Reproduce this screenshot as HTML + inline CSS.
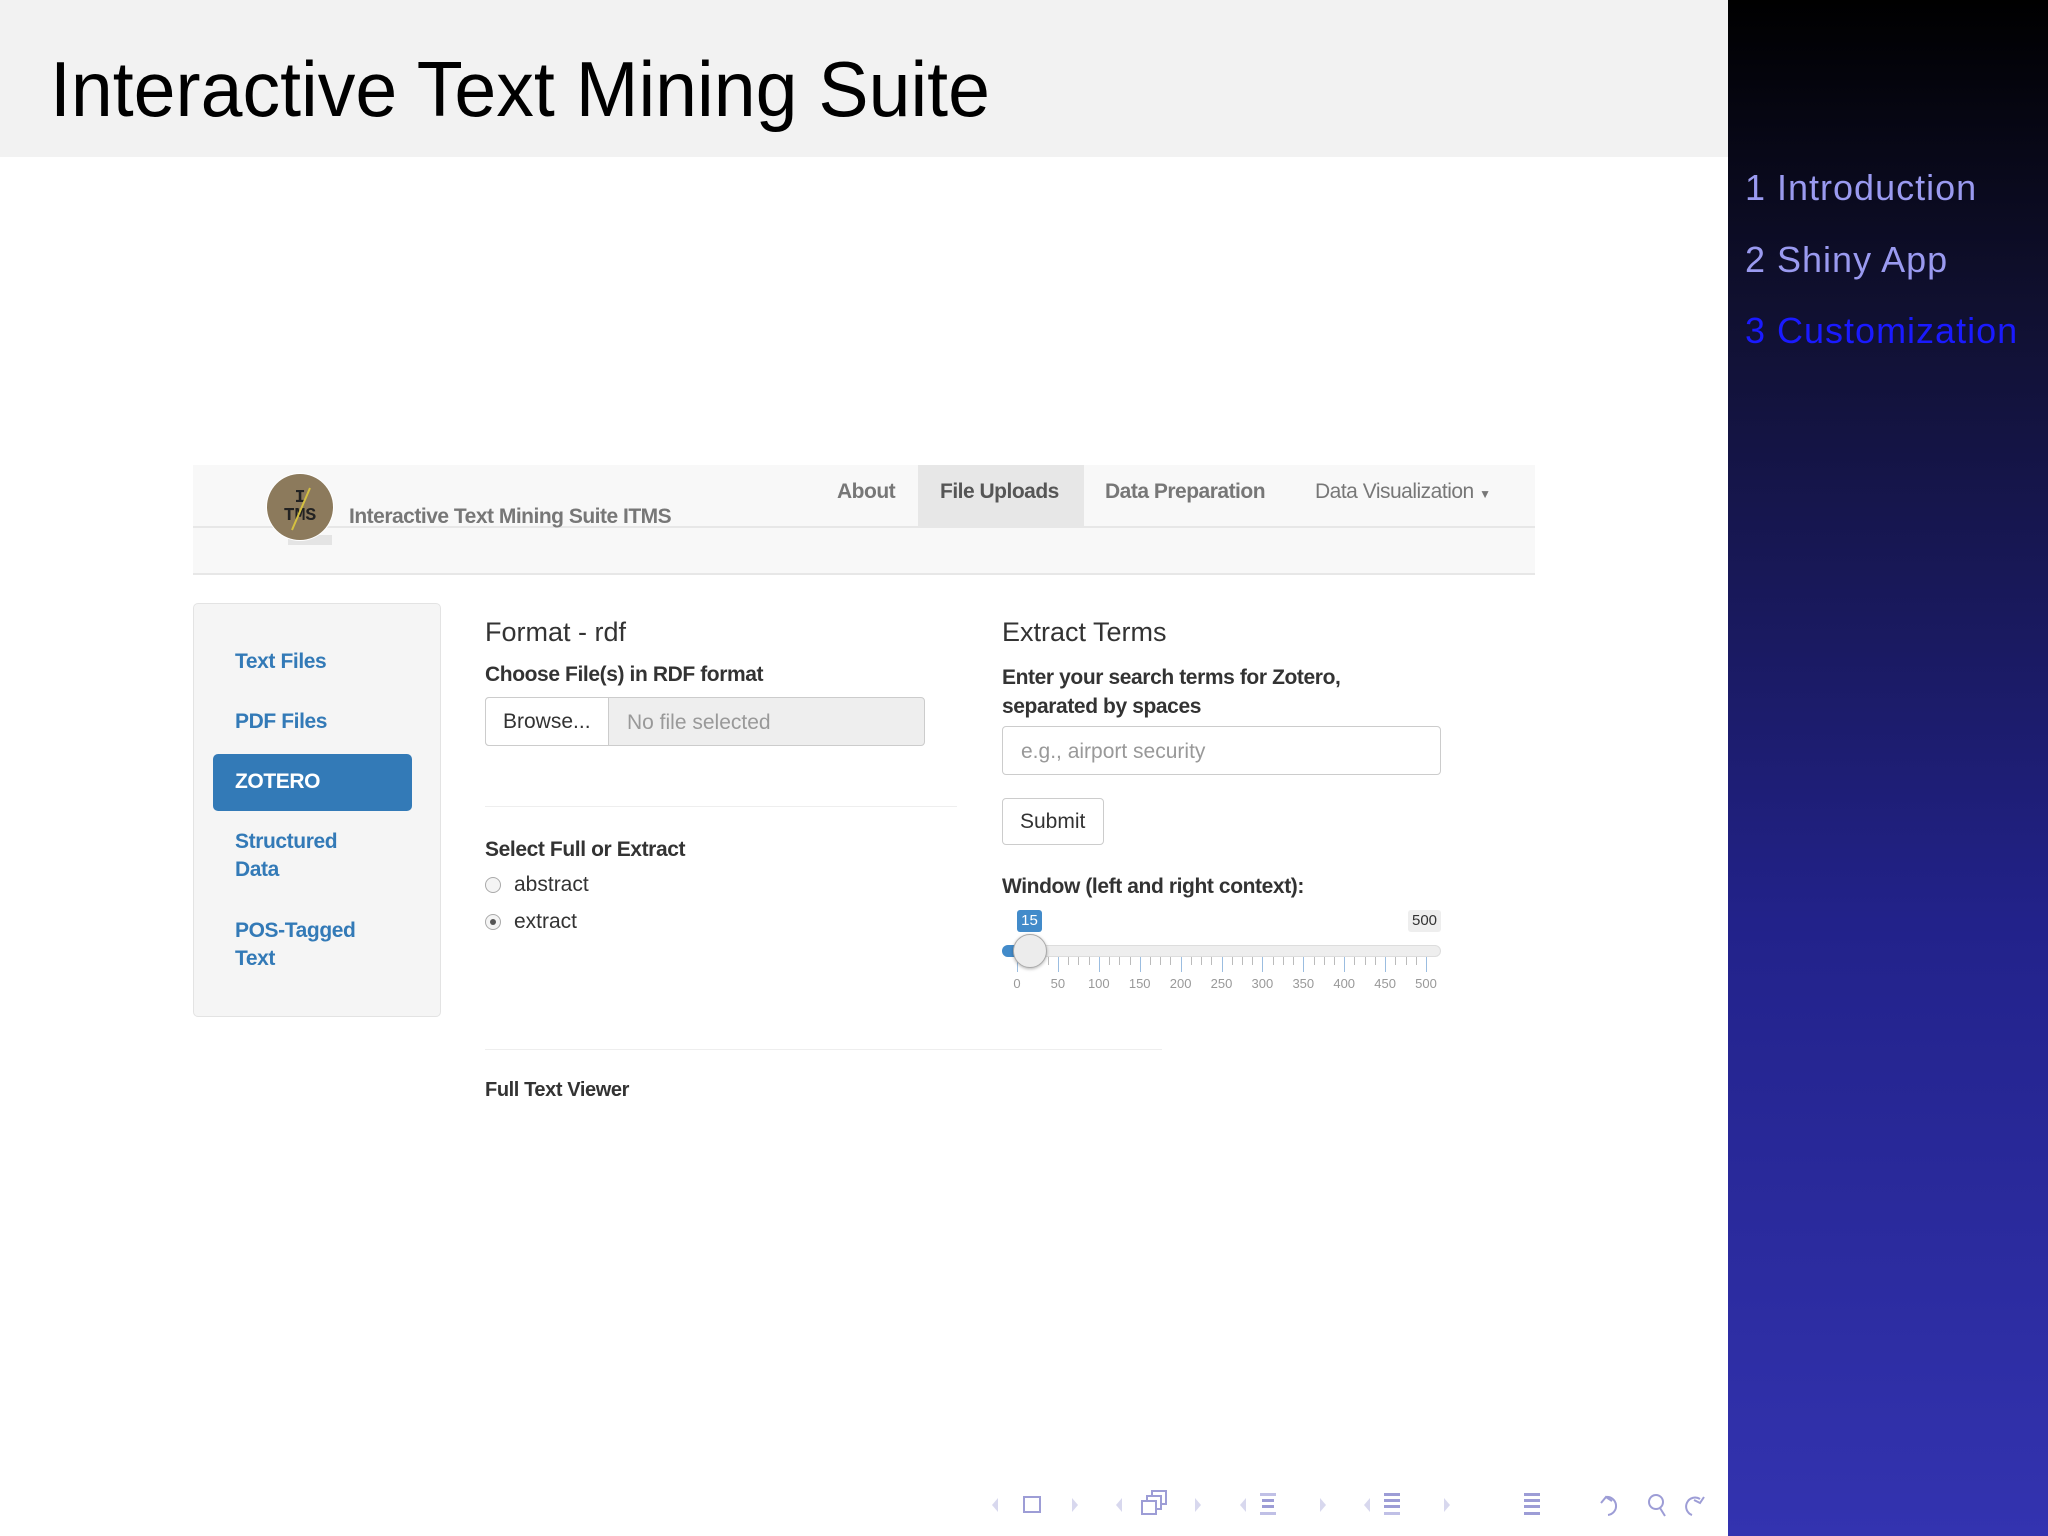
<!DOCTYPE html>
<html><head><meta charset="utf-8"><style>
*{margin:0;padding:0;box-sizing:border-box}
body{width:2048px;height:1536px;position:relative;overflow:hidden;background:#fff;font-family:"Liberation Sans",sans-serif}
.a{position:absolute;white-space:nowrap}
#hdr{left:0;top:0;width:1728px;height:157px;background:#f2f2f2}
#title{left:50px;top:44px;font-size:78px;color:#000;transform:scaleX(0.965);transform-origin:left top;font-weight:normal}
#side{left:1728px;top:0;width:320px;height:1536px;background:linear-gradient(#000 0%,#101030 20%,#22228a 60%,#3333b0 100%)}
.toc{font-size:36px;color:#9a9af0;left:1745px;letter-spacing:1px}
.nav{font-size:21px;font-weight:bold;color:#777;letter-spacing:-0.5px}
.pill{font-size:21px;font-weight:bold;color:#337ab7;left:235px;line-height:28px;letter-spacing:-0.4px}
.lbl{font-size:21px;font-weight:bold;color:#333;letter-spacing:-0.4px}
.txt{font-size:21px;color:#333}
.tk{position:absolute;top:957px;width:1px;background:#aaa}
.tl{position:absolute;top:976px;font-size:13px;color:#999;transform:translateX(-50%)}
</style></head><body>
<div id="hdr" class="a"></div>
<div id="title" class="a">Interactive Text Mining Suite</div>
<div id="side" class="a"></div>
<div class="a toc" style="top:167px">1 Introduction</div>
<div class="a toc" style="top:239px">2 Shiny App</div>
<div class="a toc" style="top:310px;color:#1a1aff">3 Customization</div>

<!-- navbar -->
<div class="a" style="left:193px;top:465px;width:1342px;height:110px;background:#f8f8f8;border-bottom:2px solid #e7e7e7"></div>
<div class="a" style="left:193px;top:526px;width:1342px;height:2px;background:#e7e7e7"></div>
<div class="a" style="left:918px;top:465px;width:166px;height:61px;background:#e7e7e7"></div>
<div class="a" style="left:288px;top:535px;width:44px;height:10px;background:#e4e4e4"></div>
<svg class="a" style="left:264px;top:472px" width="72" height="72" viewBox="0 0 72 72">
<circle cx="36" cy="35" r="34" fill="#fff"/>
<circle cx="36" cy="35" r="33" fill="#8c7a5c"/>
<text x="36" y="30" font-family="Liberation Mono" font-weight="bold" font-size="18" fill="#222" text-anchor="middle">I</text>
<text x="36" y="48" font-family="Liberation Mono" font-weight="bold" font-size="18" fill="#222" text-anchor="middle">TMS</text>
<line x1="46" y1="16" x2="28" y2="58" stroke="#d4c040" stroke-width="2"/>
</svg>
<div class="a nav" style="left:349px;top:505px">Interactive Text Mining Suite ITMS</div>
<div class="a nav" style="left:837px;top:480px">About</div>
<div class="a nav" style="left:940px;top:480px;color:#555">File Uploads</div>
<div class="a nav" style="left:1105px;top:480px">Data Preparation</div>
<div class="a nav" style="left:1315px;top:480px;font-weight:normal">Data Visualization <span style="font-size:12px">&#9660;</span></div>

<!-- well -->
<div class="a" style="left:193px;top:603px;width:248px;height:414px;background:#f5f5f5;border:1px solid #e3e3e3;border-radius:5px"></div>
<div class="a pill" style="top:648px">Text Files</div>
<div class="a pill" style="top:708px">PDF Files</div>
<div class="a" style="left:213px;top:754px;width:199px;height:57px;background:#337ab7;border-radius:5px"></div>
<div class="a pill" style="top:768px;color:#fff">ZOTERO</div>
<div class="a pill" style="top:828px">Structured<br>Data</div>
<div class="a pill" style="top:917px">POS-Tagged<br>Text</div>

<!-- middle col -->
<div class="a" style="left:485px;top:617px;font-size:27px;color:#333">Format - rdf</div>
<div class="a lbl" style="left:485px;top:663px">Choose File(s) in RDF format</div>
<div class="a" style="left:485px;top:697px;width:440px;height:49px;border:1px solid #ccc;border-radius:4px;background:#eee"></div>
<div class="a" style="left:485px;top:697px;width:124px;height:49px;border:1px solid #ccc;border-radius:4px 0 0 4px;background:#fff"></div>
<div class="a txt" style="left:503px;top:710px">Browse...</div>
<div class="a txt" style="left:627px;top:711px;color:#999">No file selected</div>
<div class="a" style="left:485px;top:806px;width:472px;height:1px;background:#eee"></div>
<div class="a lbl" style="left:485px;top:838px">Select Full or Extract</div>
<div class="a" style="left:485px;top:877px;width:16px;height:16px;border-radius:50%;border:1px solid #aaa;background:#f4f4f4"></div>
<div class="a txt" style="left:514px;top:873px">abstract</div>
<div class="a" style="left:485px;top:914px;width:16px;height:16px;border-radius:50%;border:1px solid #aaa;background:#f4f4f4"></div>
<div class="a" style="left:490px;top:919px;width:6px;height:6px;border-radius:50%;background:#555"></div>
<div class="a txt" style="left:514px;top:910px">extract</div>

<!-- right col -->
<div class="a" style="left:1002px;top:617px;font-size:27px;color:#333">Extract Terms</div>
<div class="a lbl" style="left:1002px;top:663px;line-height:29px">Enter your search terms for Zotero,<br>separated by spaces</div>
<div class="a" style="left:1002px;top:726px;width:439px;height:49px;border:1px solid #ccc;border-radius:4px"></div>
<div class="a txt" style="left:1021px;top:740px;color:#999">e.g., airport security</div>
<div class="a" style="left:1002px;top:798px;width:102px;height:47px;border:1px solid #ccc;border-radius:4px"></div>
<div class="a txt" style="left:1020px;top:810px">Submit</div>
<div class="a lbl" style="left:1002px;top:875px">Window (left and right context):</div>
<div class="a" style="left:1017px;top:910px;width:25px;height:22px;background:#428bca;border-radius:3px;color:#fff;font-size:15px;text-align:center;line-height:22px">15</div>
<div class="a" style="left:1408px;top:910px;width:33px;height:22px;background:#eee;border-radius:3px;color:#333;font-size:15px;text-align:center;line-height:22px">500</div>
<div class="a" style="left:1002px;top:945px;width:439px;height:12px;background:#eee;border:1px solid #ddd;border-radius:6px"></div>
<div class="a" style="left:1002px;top:945px;width:30px;height:12px;background:#428bca;border-radius:6px 0 0 6px"></div>
<div id="ticks"></div>
<div class="a" style="left:1013px;top:934px;width:34px;height:34px;border-radius:50%;background:#ececec;border:1px solid #aaa;box-shadow:0 1px 3px rgba(0,0,0,.3)"></div>
<script>
var h='';for(var i=0;i<=40;i++){var x=1017+i*10.225;var maj=i%4==0;h+='<div class="tk" style="left:'+x.toFixed(1)+'px;height:'+(maj?15:8)+'px;background:'+(maj?'#9bbde0':'#bbb')+'"></div>';if(maj)h+='<div class="tl" style="left:'+x.toFixed(1)+'px">'+(i/4*50)+'</div>';}
document.getElementById('ticks').innerHTML=h;
</script>
<div class="a" style="left:485px;top:1049px;width:677px;height:1px;background:#eee"></div>
<div class="a lbl" style="left:485px;top:1079px;font-size:20px">Full Text Viewer</div>

<!-- beamer nav -->
<svg class="a" style="left:980px;top:1485px" width="740" height="40" viewBox="0 0 740 40" fill="#d8d8ee" stroke="none">
<path d="M18 13 L12 20 L18 27Z"/><rect x="44" y="12" width="16" height="15" fill="none" stroke="#9d9dd6" stroke-width="2"/><path d="M92 13 L98 20 L92 27Z"/>
<path d="M142 13 L136 20 L142 27Z"/>
<g fill="none" stroke="#9d9dd6" stroke-width="2"><rect x="172" y="6" width="14" height="13"/><rect x="167" y="11" width="14" height="13" fill="#fff"/><rect x="162" y="16" width="14" height="13" fill="#fff"/></g>
<path d="M215 13 L221 20 L215 27Z"/>
<path d="M266 13 L260 20 L266 27Z"/><g fill="#c0c0e6"><rect x="280" y="8" width="16" height="3"/><rect x="282" y="14" width="12" height="3" fill="#9d9dd6"/><rect x="282" y="20" width="12" height="3" fill="#9d9dd6"/><rect x="280" y="27" width="16" height="3"/></g><path d="M340 13 L346 20 L340 27Z"/>
<path d="M390 13 L384 20 L390 27Z"/><g fill="#9d9dd6"><rect x="404" y="8" width="16" height="3"/><rect x="404" y="14" width="16" height="3"/><rect x="404" y="20" width="16" height="3"/><rect x="404" y="27" width="16" height="3" fill="#c0c0e6"/></g><path d="M464 13 L470 20 L464 27Z"/>
<g fill="#9d9dd6"><rect x="544" y="8" width="16" height="3"/><rect x="544" y="14" width="16" height="3"/><rect x="544" y="20" width="16" height="3"/><rect x="544" y="27" width="16" height="3"/></g>
<g fill="none" stroke="#9d9dd6" stroke-width="2"><path d="M626 12 a9 9 0 1 1 2 18"/><path d="M621 18 l5 -6 l6 4"/><circle cx="676" cy="17" r="7"/><path d="M680 23 l5 8"/><path d="M712 30 a9 9 0 1 1 8 -16"/><path d="M724 12 l-4 6 l-6 -3"/></g>
</svg>
</body></html>
